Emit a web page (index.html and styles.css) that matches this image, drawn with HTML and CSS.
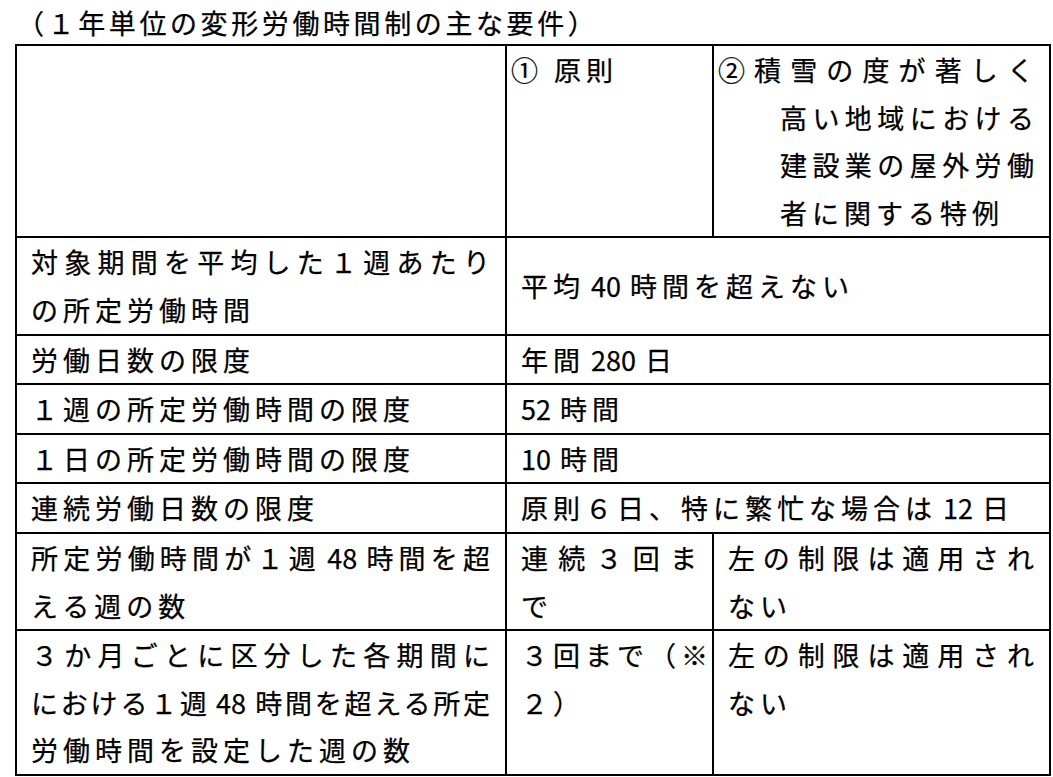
FILE: index.html
```html
<!DOCTYPE html>
<html lang="ja">
<head>
<meta charset="utf-8">
<link rel="stylesheet" href="styles.css">
</head>
<body>
<div class="title">（１年単位の変形労働時間制の主な要件）</div>
<table class="req">
  <colgroup>
    <col class="c1">
    <col class="c2">
    <col class="c3">
  </colgroup>
  <tr>
    <td></td>
    <td class="hd">① 原則</td>
    <td class="hd"><span class="j">②積雪の度が著しく</span><span class="j ind">高い地域における</span><span class="j ind">建設業の屋外労働</span><span class="ind">者に関する特例</span></td>
  </tr>
  <tr>
    <td><span class="j">対象期間を平均した１週あたり</span><span>の所定労働時間</span></td>
    <td colspan="2" class="mid">平均<span class="h"> 40 </span>時間を超えない</td>
  </tr>
  <tr>
    <td>労働日数の限度</td>
    <td colspan="2">年間<span class="h"> 280 </span>日</td>
  </tr>
  <tr>
    <td>１週の所定労働時間の限度</td>
    <td colspan="2"><span class="h">52 </span>時間</td>
  </tr>
  <tr>
    <td>１日の所定労働時間の限度</td>
    <td colspan="2"><span class="h">10 </span>時間</td>
  </tr>
  <tr>
    <td>連続労働日数の限度</td>
    <td colspan="2">原則６日、特に繁忙な場合は<span class="h"> 12 </span>日</td>
  </tr>
  <tr>
    <td><span class="j">所定労働時間が１週<span class="h"> 48 </span>時間を超</span><span>える週の数</span></td>
    <td><span class="j">連続３回ま</span><span>で</span></td>
    <td><span class="j">左の制限は適用され</span><span>ない</span></td>
  </tr>
  <tr>
    <td><span class="j">３か月ごとに区分した各期間に</span><span class="j tight">における１週<span class="h"> 48 </span>時間を超える所定</span><span>労働時間を設定した週の数</span></td>
    <td><span class="j">３回まで（※</span><span>２）</span></td>
    <td><span class="j">左の制限は適用され</span><span>ない</span></td>
  </tr>
</table>
</body>
</html>
```

FILE: styles.css
```css
html, body {
  margin: 0;
  padding: 0;
  background: #fff;
}

body {
  color: #000;
  font-family: "Noto Sans CJK JP", "Noto Sans", sans-serif;
  font-size: 27px;
  -webkit-text-stroke: 0.25px #000;
}

.title {
  height: 44px;
  line-height: 46px;
  padding-left: 17px;
  letter-spacing: 3.6px;
  white-space: nowrap;
}

.req {
  border-collapse: collapse;
  table-layout: fixed;
  width: 1034px;
  margin-left: 15px;
}

.c1 { width: 490px; }
.c2 { width: 207px; }
.c3 { width: 337px; }

.req td {
  border: 2px solid #000;
  padding: 0 15px 0 14px;
  line-height: 47.6px;
  vertical-align: top;
  letter-spacing: 5px;
  white-space: nowrap;
}

.req td.mid {
  vertical-align: middle;
}

.req td.hd {
  padding-left: 4px;
  padding-right: 15px;
}

.req td > span {
  display: block;
}

.req td > span.h {
  display: inline;
}

.j {
  text-align: justify;
  text-align-last: justify;
  margin-right: -5px;
}

.tight {
  letter-spacing: 2.6px;
  margin-right: -2.6px;
}

.ind {
  margin-left: 62px;
}

.h {
  letter-spacing: 0;
  padding-right: 3px;
}
```
